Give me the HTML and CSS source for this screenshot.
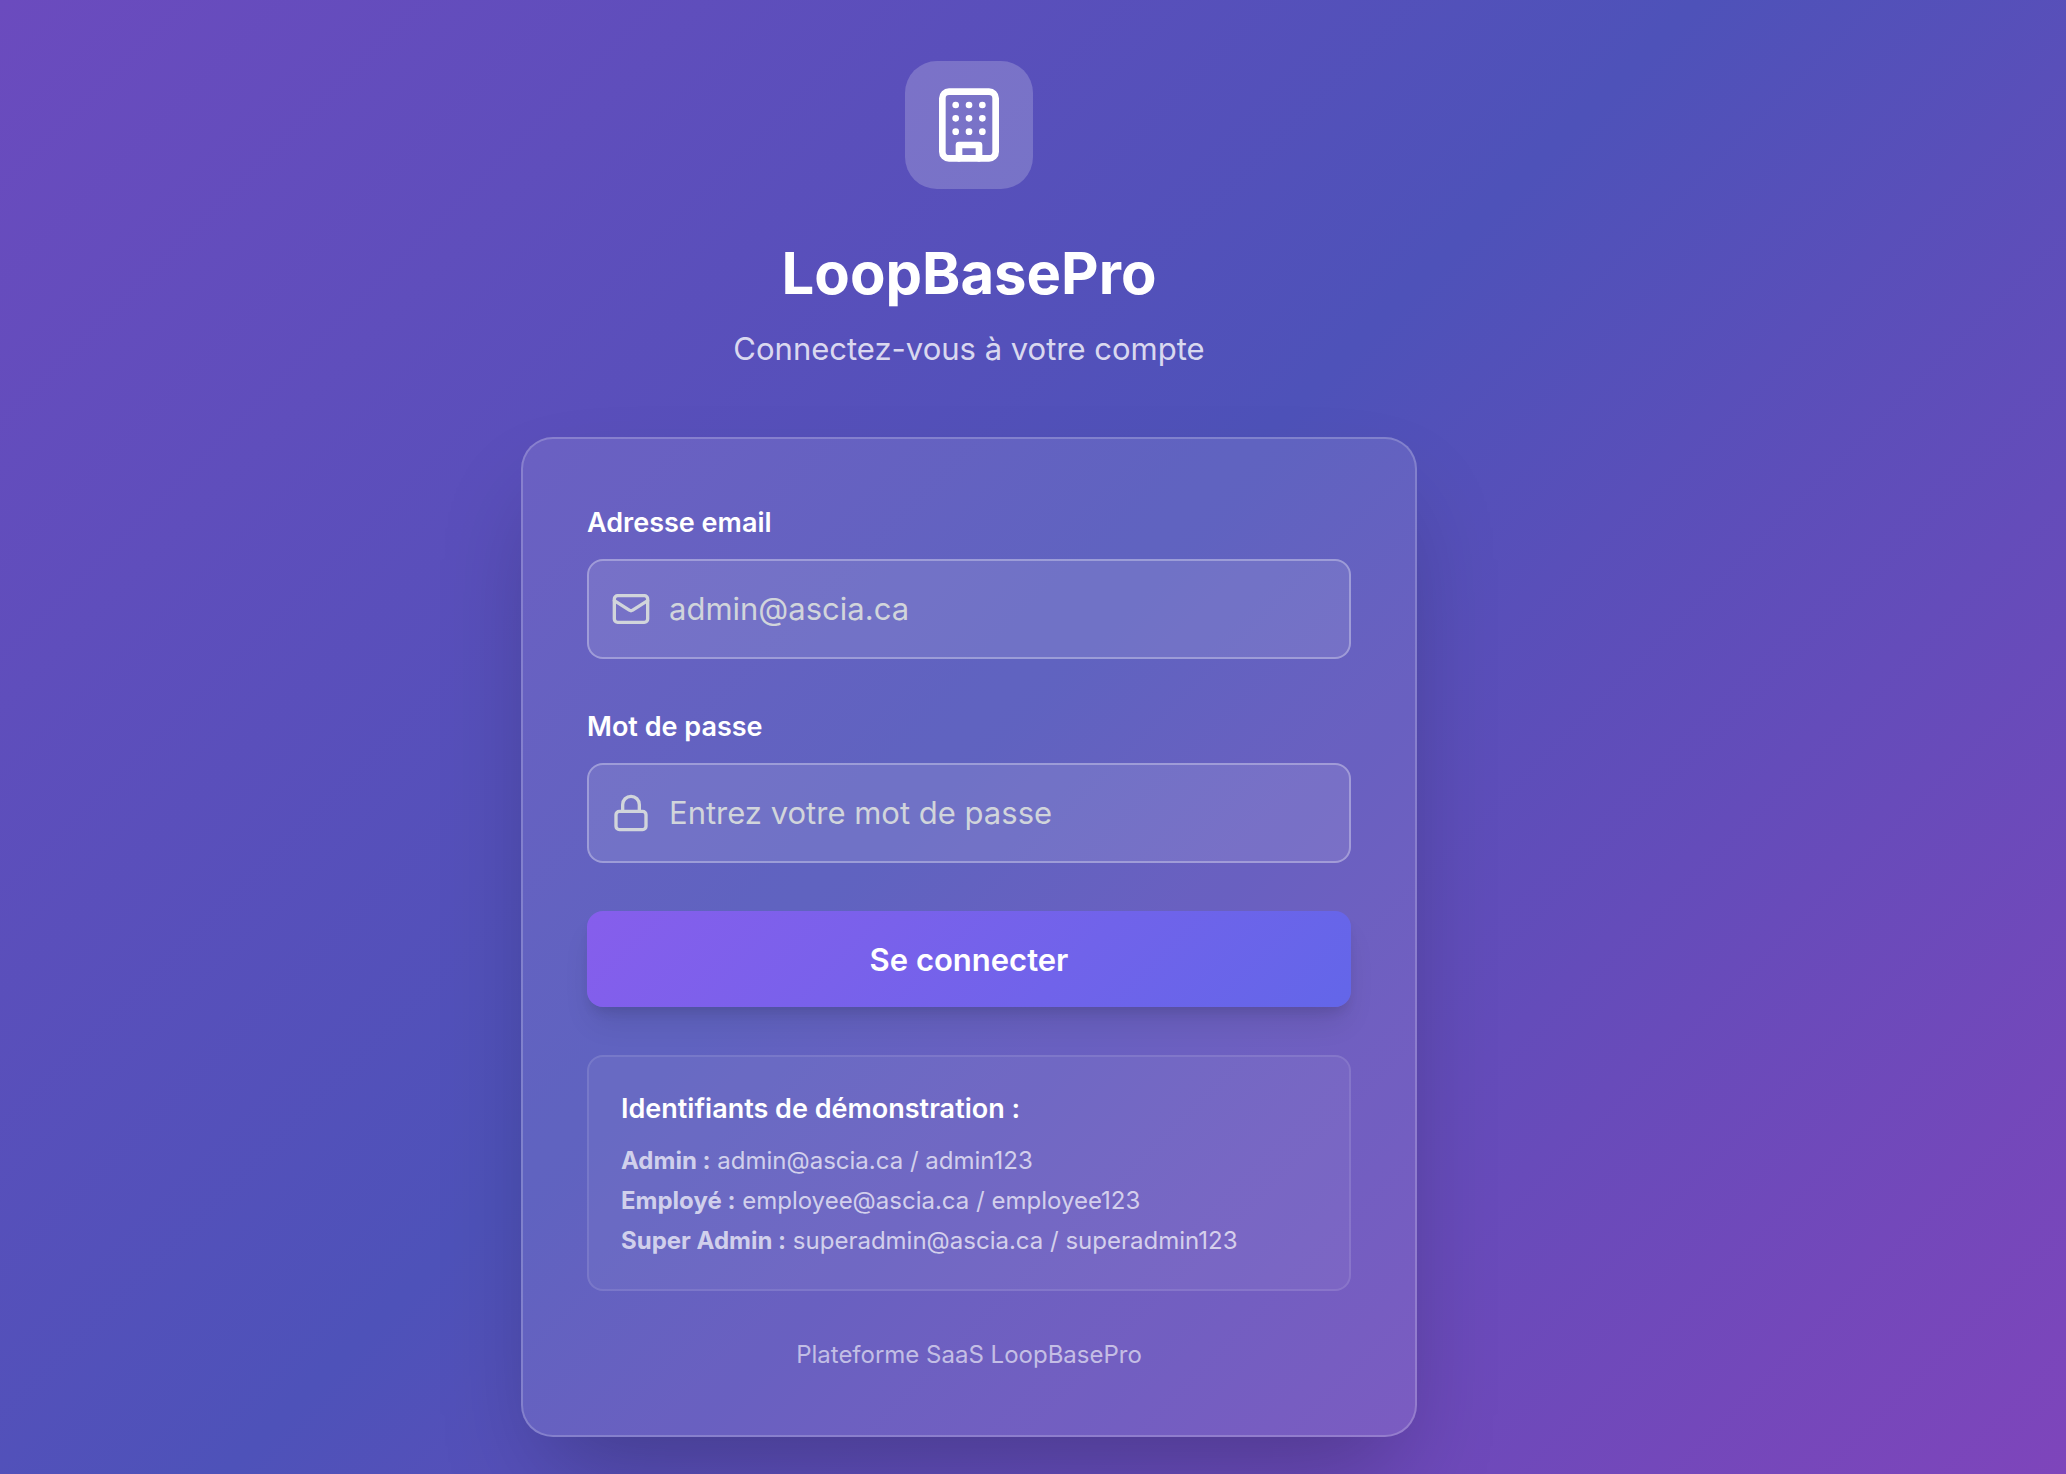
FILE: index.html
```
<!DOCTYPE html>
<html lang="fr">
<head>
    <meta charset="UTF-8">
    <meta name="viewport" content="width=device-width, initial-scale=1.0">
    <title>LoopBasePro</title>
    <link rel="stylesheet" href="styles.css">
</head>
<body>
    <main class="login-page">
        <!-- Logo and title -->
        <header class="login-header">
            <div class="logo">
                <svg class="logo-icon" viewBox="0 0 24 24" fill="none" stroke="currentColor" stroke-width="2" stroke-linecap="round" stroke-linejoin="round" aria-hidden="true">
                    <rect x="4" y="2" width="16" height="20" rx="2"/>
                    <path d="M9 22v-4h6v4"/>
                    <path d="M8 6h.01M12 6h.01M16 6h.01M8 10h.01M12 10h.01M16 10h.01M8 14h.01M12 14h.01M16 14h.01"/>
                </svg>
            </div>
            <h1 class="title">LoopBasePro</h1>
            <p class="subtitle">Connectez-vous à votre compte</p>
        </header>

        <!-- Login card -->
        <section class="card">
            <form class="login-form">
                <div class="field">
                    <label for="email">Adresse email</label>
                    <div class="input-box">
                        <svg class="input-icon" viewBox="0 0 24 24" fill="none" stroke="currentColor" stroke-width="2" stroke-linecap="round" stroke-linejoin="round" aria-hidden="true">
                            <rect x="2" y="4" width="20" height="16" rx="2"/>
                            <path d="m22 7-8.97 5.7a1.94 1.94 0 0 1-2.06 0L2 7"/>
                        </svg>
                        <input type="email" id="email" placeholder="admin@ascia.ca">
                    </div>
                </div>
                <div class="field">
                    <label for="password">Mot de passe</label>
                    <div class="input-box">
                        <svg class="input-icon" viewBox="0 0 24 24" fill="none" stroke="currentColor" stroke-width="2" stroke-linecap="round" stroke-linejoin="round" aria-hidden="true">
                            <rect x="3" y="11" width="18" height="11" rx="2"/>
                            <path d="M7 11V7a5 5 0 0 1 10 0v4"/>
                        </svg>
                        <input type="password" id="password" placeholder="Entrez votre mot de passe">
                    </div>
                </div>
                <button type="submit" class="submit-button">Se connecter</button>
            </form>

            <!-- Demo accounts -->
            <div class="demo">
                <h2>Identifiants de démonstration :</h2>
                <div class="demo-list">
                    <p><strong>Admin :</strong> admin@ascia.ca / admin123</p>
                    <p><strong>Employé :</strong> employee@ascia.ca / employee123</p>
                    <p><strong>Super Admin :</strong> superadmin@ascia.ca / superadmin123</p>
                </div>
            </div>

            <p class="platform">Plateforme SaaS LoopBasePro</p>
        </section>
    </main>
</body>
</html>
```
FILE: styles.css
```
* {
    box-sizing: border-box;
}
body {
    margin: 0;
    min-height: 100vh;
    font-family: Inter, "Liberation Sans", sans-serif;
    color: white;
    background: linear-gradient(135deg, #6b4bbe, #4e52b9 48%, #7e45bb);
    background-attachment: fixed;
}
h1, h2, p {
    margin: 0;
}
.login-page {
    display: flex;
    flex-direction: column;
    align-items: center;
    min-height: 100vh;
    padding: 61px 128px 37px 0;
    overflow: hidden;
}
.login-header {
    display: flex;
    flex-direction: column;
    align-items: center;
    margin-bottom: 64px;
}
.logo {
    display: flex;
    justify-content: center;
    align-items: center;
    width: 128px;
    height: 128px;
    margin-bottom: 48px;
    border-radius: 32px;
    background-color: rgba(255, 255, 255, 0.2);
}
.logo-icon {
    width: 80px;
    height: 80px;
}
.title {
    margin-bottom: 16px;
    font-size: 58px;
    line-height: 72px;
    font-weight: 700;
}
.subtitle {
    font-size: 31px;
    line-height: 48px;
    color: rgba(255, 255, 255, 0.8);
}
.card {
    width: 100%;
    max-width: 896px;
    padding: 64px;
    border: 2px solid rgba(255, 255, 255, 0.2);
    border-radius: 32px;
    background-color: rgba(255, 255, 255, 0.1);
    box-shadow: 0 50px 100px -24px rgba(0, 0, 0, 0.25);
}
.login-form {
    display: flex;
    flex-direction: column;
    gap: 48px;
}
.field {
    display: flex;
    flex-direction: column;
    gap: 16px;
}
.field label {
    font-size: 27px;
    line-height: 40px;
    font-weight: 600;
}
.input-box {
    display: flex;
    align-items: center;
    gap: 18px;
    height: 100px;
    padding: 0 22px;
    border: 2px solid rgba(255, 255, 255, 0.3);
    border-radius: 16px;
    background-color: rgba(255, 255, 255, 0.1);
}
.input-icon {
    flex-shrink: 0;
    width: 40px;
    height: 40px;
    color: #d1d5db;
}
.input-box input {
    flex: 1;
    min-width: 0;
    padding: 0;
    border: none;
    outline: none;
    background: transparent;
    color: white;
    font: inherit;
    font-size: 31px;
    line-height: 48px;
}
.input-box input::placeholder {
    color: #d1d5db;
    opacity: 1;
}
.submit-button {
    height: 96px;
    border: none;
    border-radius: 16px;
    background: linear-gradient(135deg, #865eec, #6366e9);
    box-shadow: 0 20px 30px -6px rgba(0, 0, 0, 0.1), 0 8px 12px -4px rgba(0, 0, 0, 0.1);
    color: white;
    font: inherit;
    font-size: 31px;
    font-weight: 600;
    cursor: pointer;
}
.demo {
    margin-top: 48px;
    padding: 32px;
    border: 2px solid rgba(255, 255, 255, 0.1);
    border-radius: 16px;
    background-color: rgba(255, 255, 255, 0.05);
}
.demo h2 {
    margin-bottom: 16px;
    font-size: 27px;
    line-height: 40px;
    font-weight: 600;
}
.demo-list {
    display: flex;
    flex-direction: column;
    gap: 8px;
    font-size: 24px;
    line-height: 32px;
    color: rgba(255, 255, 255, 0.7);
}
.platform {
    margin-top: 48px;
    font-size: 24px;
    line-height: 32px;
    text-align: center;
    color: rgba(255, 255, 255, 0.6);
}
```
